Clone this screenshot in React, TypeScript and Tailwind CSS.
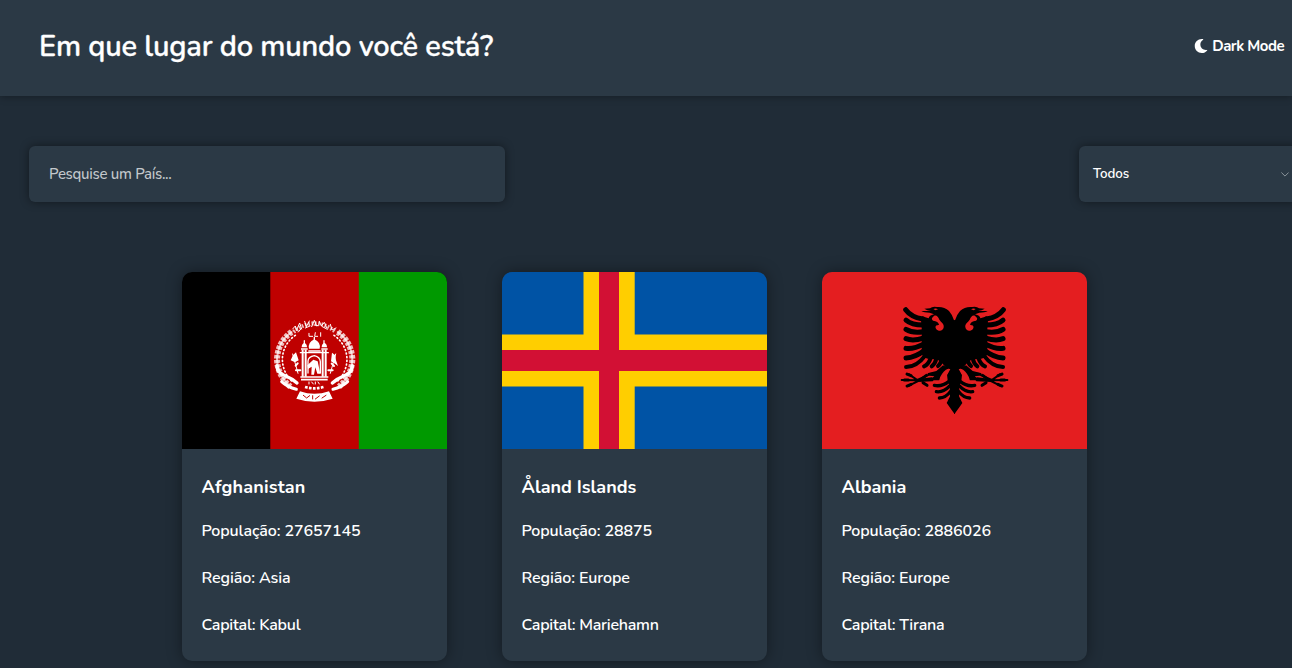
import React from "react";
import { FaMoon } from "react-icons/fa";

function AfghanistanFlag() {
  return (
    <svg viewBox="0 0 265 177" className="block h-[177px] w-[265px]">
      <rect width="265" height="177" fill="#000" />
      <rect x="88.3" width="89" height="177" fill="#bf0000" />
      <rect x="176.8" width="88.4" height="177" fill="#009900" />
      <g transform="translate(83 38) scale(0.33333)" fill="none" stroke="#fff" strokeLinecap="round">
        <path d="M80 66Q40 94 36 145Q36 194 76 230" strokeWidth="18" strokeDasharray="10 4" strokeLinecap="butt" opacity="0.75" />
        <path d="M218 66Q258 94 262 145Q262 194 222 230" strokeWidth="18" strokeDasharray="10 4" strokeLinecap="butt" opacity="0.75" />
        <path d="M80 66Q40 94 36 145Q36 194 76 230M218 66Q258 94 262 145Q262 194 222 230" strokeWidth="6" opacity="0.7" />
        <path d="M91 76Q54 102 52 147Q53 190 85 218M207 76Q244 102 246 147Q245 190 213 218" strokeWidth="5" strokeDasharray="3 8" />
        <path d="M36 167Q36 188 62 198Q80 205 96 219M262 167Q262 188 236 198Q218 205 202 219" strokeWidth="10" />
        <path d="M50 215Q68 232 94 238M248 215Q230 232 204 238" strokeWidth="9" />
        <path d="M86 66Q148 14 212 66" strokeWidth="12" strokeDasharray="5 5" strokeLinecap="butt" opacity="0.75" />
        <path d="M83 57L91 48L94 62L104 39L110 57M119 34L124 50L133 33M140 50L148 31L155 48M163 34L169 48L178 37L185 53M196 43L201 60L213 54" strokeWidth="3" />
        <path d="M100 66L110 54M121 54L135 48M147 45L160 47M172 50L187 58" strokeWidth="3" />
        <path d="M132 70V79H143M151 68L149 79H158M167 68V79" strokeWidth="3" />
        <path d="M113 119V200M122 119V200M173 119V200M182 119V200" strokeWidth="6" strokeLinecap="butt" />
        <path d="M108 117H128M169 117H188M106 201H190M108 209H188" strokeWidth="5" strokeLinecap="butt" />
        <path d="M106 128H190" strokeWidth="4" />
        <path d="M118 92V103M177 92V103M148 82V90" strokeWidth="4" />
        <path d="M110 112Q110 101 118 99Q126 101 126 112ZM170 112Q170 101 178 99Q186 101 186 112ZM132 116Q128 97 148 88Q168 97 164 116Z" fill="#fff" stroke="none" />
        <path d="M132 123H165" strokeWidth="5" />
        <path d="M129 189V153Q130 140 148 137Q165 141 166 155V189" strokeWidth="4" />
        <path d="M127 166L145 149L158 154L166 191H157L151 172L147 194H139L140 170L129 177Z" fill="#fff" stroke="none" />
        <path d="M83 132L99 190M212 132L196 190" strokeWidth="3" />
        <path d="M84 136L93 127L101 151L90 157L77 151ZM211 136L201 128L198 154L208 160L219 168L213 151Z" fill="#fff" stroke="none" />
        <path d="M93 181H106M190 181H203M98 160L92 167M200 161L207 168" strokeWidth="6" />
        <path d="M132 216V222M140 216L145 222M151 216V222M159 216L163 222" strokeWidth="3" />
        <path d="M120 231Q148 239 176 231" strokeWidth="8" strokeDasharray="8 4" strokeLinecap="butt" />
        <path d="M105 244Q148 259 192 244L203 266Q148 284 94 266Z" fill="#fff" stroke="none" />
        <path d="M115 256L125 264L134 257M143 267V257M151 267L163 258M171 264L183 256" stroke="#bf0000" strokeWidth="3" />
      </g>
    </svg>
  );
}

function AlandFlag() {
  return (
    <svg viewBox="0 0 265 177" className="block h-[177px] w-[265px]">
      <rect width="265" height="177" fill="#0053a5" />
      <path d="M81.5 0H132.7V62.4H265V114.5H132.7V177H81.5V114.5H0V62.4H81.5Z" fill="#ffce00" />
      <path d="M97 0H117V78H265V99H117V177H97V99H0V78H97Z" fill="#d21034" />
    </svg>
  );
}

function EagleHalf() {
  return (
    <>
      <path d="M196 77H193Q188 60 178 49Q163 35 142 37Q128 34 121 41L104 42Q112 47 124 49L95 49Q103 54 120 54L133 59Q118 62 117 71L97 65Q92 78 96 100V178Q101 193 125 193Q145 193 154 202L170 220L182 224L172 240L174 258L180 275L181 305L171 325L194 357H196Z" />
      <g fill="none" stroke="#000" strokeLinecap="round">
        <path d="M48 45Q64 67 99 73M49 76Q66 91 100 91M49 104Q68 116 101 111M49 132Q70 140 101 130M49 161Q72 164 103 148M49 190Q76 189 106 166" strokeWidth="15" />
        <path d="M49 217Q81 217 107 182M103 215Q116 210 123 190M126 215Q137 207 140 191M145 214Q154 207 155 195" strokeWidth="12" />
        <path d="M134 272Q156 277 178 260M140 291Q161 294 181 273M149 310Q168 310 185 287" strokeWidth="10" />
        <path d="M36 256L80 257L126 251M58 239L83 256L125 237M58 273L85 259L128 257" strokeWidth="6" />
        <path d="M52 238L64 243M44 256H56M52 274L64 269M100 264L112 272M98 251L110 242" strokeWidth="9" />
      </g>
      <path d="M160 212L140 229L113 236L120 243L134 245L118 257L149 257L160 242L177 220Z" />
      <path d="M130 67C137 57 145 65 149 75C155 84 164 87 162 98C160 111 145 111 139 102C134 93 142 91 148 91Q146 79 130 78Q123 72 130 67Z" fill="#e41e20" />
      <path d="M175 223Q180 232 168 246Q157 262 149 259Q149 246 162 231Q170 222 175 223Z" fill="#e41e20" />
      <path d="M131 43Q138 39 145 44L137 47Z" fill="#e41e20" />
    </>
  );
}

function AlbaniaFlag() {
  return (
    <svg viewBox="0 0 265 177" className="block h-[177px] w-[265px]">
      <rect width="265" height="177" fill="#e41e20" />
      <g transform="translate(67.7 22.7) scale(0.33333)">
        <EagleHalf />
        <g transform="translate(389 0) scale(-1 1)">
          <EagleHalf />
        </g>
      </g>
    </svg>
  );
}

const countries = [
  { name: "Afghanistan", population: "27657145", region: "Asia", capital: "Kabul", Flag: AfghanistanFlag, nameClass: "tracking-[0.2px]" },
  { name: "Åland Islands", population: "28875", region: "Europe", capital: "Mariehamn", Flag: AlandFlag, nameClass: "tracking-normal" },
  { name: "Albania", population: "2886026", region: "Europe", capital: "Tirana", Flag: AlbaniaFlag, nameClass: "tracking-normal" },
];

export default function App() {
  return (
    <div className="flex h-[668px] w-full flex-col overflow-hidden bg-[#202c37] font-['Nunito','Open_Sans',sans-serif] text-white">
      <header className="flex h-24 shrink-0 items-center justify-between bg-[#2b3945] pr-2 pl-[39px] pb-[3px] shadow-[0_0_8px_rgba(0,0,0,0.4)]">
        <h1 className="pt-px text-[29px] font-semibold tracking-[-0.2px] whitespace-nowrap [-webkit-text-stroke:0.3px_white]">
          <span>Em que lugar do mundo você está?</span>
        </h1>
        <button className="flex items-center gap-1 text-[15px] font-bold tracking-[-0.52px]">
          <FaMoon className="mb-0.5 size-[14px]" />
          <span>Dark Mode</span>
        </button>
      </header>
      <div className="mt-[50px] flex shrink-0 justify-between pl-[29px]">
        <input
          placeholder="Pesquise um País..."
          className="h-14 w-[476px] rounded-[6px] bg-[#2b3945] px-5 pb-px text-[15px] font-medium tracking-[-0.3px] shadow-[0_0_10px_rgba(0,0,0,0.45)] outline-none placeholder:text-[#c3c8cc]"
        />
        <button className="-mr-2 flex h-14 w-[221px] items-center justify-between rounded-[6px] bg-[#2b3945] pr-[11px] pl-[14px] text-[13.33px] font-semibold tracking-[-0.1px] shadow-[0_0_10px_rgba(0,0,0,0.45)]">
          <span className="pt-0.5">Todos</span>
          <svg viewBox="0 0 8 5" className="h-[5px] w-2" fill="none" stroke="#8b949b">
            <path d="M0.4 0.5L4 4.1L7.6 0.5" />
          </svg>
        </button>
      </div>
      <main className="mt-[70px] flex shrink-0 gap-[55px] pl-[182px]">
        {countries.map(({ name, population, region, capital, Flag, nameClass }) => (
          <article key={name} className="h-[389px] w-[265px] rounded-[10px] bg-[#2b3945] shadow-[0_0_15px_rgba(0,0,0,0.4)]">
            <div className="overflow-hidden rounded-t-[10px]">
              <Flag />
            </div>
            <div className="flex flex-col px-[19.5px] pt-[26px] text-[16px] font-semibold">
              <h2 className="mb-5 text-[18px] leading-6 font-bold">
                <span className={nameClass}>{name}</span>
              </h2>
              <div className="flex flex-col gap-[23px] leading-6 tracking-[-0.1px] whitespace-nowrap">
                <p><span>População: {population}</span></p>
                <p><span>Região: {region}</span></p>
                <p className="tracking-[-0.24px]"><span>Capital: {capital}</span></p>
              </div>
            </div>
          </article>
        ))}
      </main>
    </div>
  );
}
